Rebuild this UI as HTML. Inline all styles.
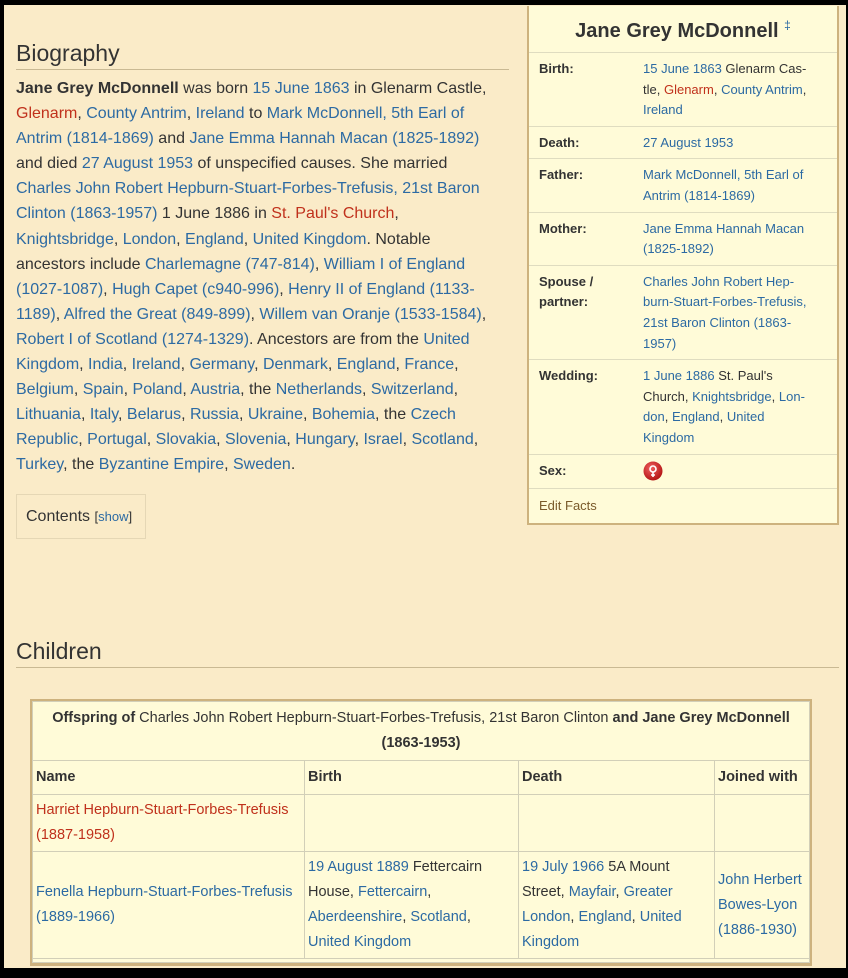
<!DOCTYPE html>
<html><head><meta charset="utf-8"><style>
*{margin:0;padding:0;box-sizing:border-box}
html,body{width:848px;height:978px;background:#000;overflow:hidden}
body{font-family:"Liberation Sans",Arial,sans-serif;color:#333}
#pg{position:absolute;left:4px;top:5px;width:842px;height:963px;background:#faebc8}
a{color:#2c6aa3;text-decoration:none}
a.r{color:#c0311c}
h2{position:absolute;font-weight:normal;font-size:23px;color:#333;border-bottom:1px solid #c9b993;padding-bottom:2px}
#bio{position:absolute;left:12px;top:71px;width:484px;font-size:16px;line-height:25.1px;color:#333}
#toc{position:absolute;left:12px;top:489px;width:130px;height:45px;border:1px solid #e5d7b5;font-size:16px;line-height:43px;padding-left:9px}
#toc span{font-size:13px}
#ib{position:absolute;left:523px;top:1px;width:312px;height:519px;background:#fffbd8;border:2px solid #cdb27e;border-top:none}
#ib .t{text-align:center;font-weight:bold;font-size:20px;padding-top:12px;height:46px;color:#333}
#ib .t sup{font-size:12px;color:#2c6aa3;font-weight:normal;vertical-align:8px}
#ib table{border-collapse:collapse;width:100%;font-size:13px;line-height:20.6px}
#ib td{border-top:1px solid #dfdcc0;vertical-align:top;padding:6px 8px 5px 10px}
#ib td.l{font-weight:bold;width:103px;color:#333}
#ib td.v{padding-left:11px;padding-right:20px}
#ct{position:absolute;left:26px;top:694px;width:782px;border:2px solid #cdb27e;border-bottom-width:3px;background:#fffbd8;font-size:14.5px;line-height:25px}
#ct table{border-collapse:collapse;width:100%}
#ct td,#ct th{border:1px solid #d2cfb8;vertical-align:middle;padding:3px 3px;text-align:left}
#ct th{font-weight:bold}
</style></head><body><div id="pg">
<h2 style="left:12px;top:35px;width:493px">Biography</h2>
<div id="bio"><b>Jane Grey McDonnell</b> was born <a>15 June 1863</a> in Glenarm Castle, <a class="r">Glenarm</a>, <a>County Antrim</a>, <a>Ireland</a> to <a>Mark McDonnell, 5th Earl of Antrim (1814-1869)</a> and <a>Jane Emma Hannah Macan (1825-1892)</a> and died <a>27 August 1953</a> of unspecified causes. She married <a>Charles John Robert Hepburn-Stuart-Forbes-Trefusis, 21st Baron Clinton (1863-1957)</a> 1 June 1886 in <a class="r">St. Paul's Church</a>, <a>Knightsbridge</a>, <a>London</a>, <a>England</a>, <a>United Kingdom</a>. Notable ancestors include <a>Charlemagne (747-814)</a>, <a>William I of England (1027-1087)</a>, <a>Hugh Capet (c940-996)</a>, <a>Henry II of England (1133-1189)</a>, <a>Alfred the Great (849-899)</a>, <a>Willem van Oranje (1533-1584)</a>, <a>Robert I of Scotland (1274-1329)</a>. Ancestors are from the <a>United Kingdom</a>, <a>India</a>, <a>Ireland</a>, <a>Germany</a>, <a>Denmark</a>, <a>England</a>, <a>France</a>, <a>Belgium</a>, <a>Spain</a>, <a>Poland</a>, <a>Austria</a>, the <a>Netherlands</a>, <a>Switzerland</a>, <a>Lithuania</a>, <a>Italy</a>, <a>Belarus</a>, <a>Russia</a>, <a>Ukraine</a>, <a>Bohemia</a>, the <a>Czech Republic</a>, <a>Portugal</a>, <a>Slovakia</a>, <a>Slovenia</a>, <a>Hungary</a>, <a>Israel</a>, <a>Scotland</a>, <a>Turkey</a>, the <a>Byzantine Empire</a>, <a>Sweden</a>.</div>
<div id="toc">Contents <span>[<a>show</a>]</span></div>
<div id="ib"><div class="t">Jane Grey McDonnell <sup>‡</sup></div>
<table>
<tr><td class="l">Birth:</td><td class="v"><a>15 June 1863</a> Glenarm Cas-tle, <a class="r">Glenarm</a>, <a>County Antrim</a>, <a>Ireland</a></td></tr>
<tr><td class="l">Death:</td><td class="v"><a>27 August 1953</a></td></tr>
<tr><td class="l">Father:</td><td class="v"><a>Mark McDonnell, 5th Earl of Antrim (1814-1869)</a></td></tr>
<tr><td class="l">Mother:</td><td class="v"><a>Jane Emma Hannah Macan (1825-1892)</a></td></tr>
<tr><td class="l">Spouse / partner:</td><td class="v"><a>Charles John Robert Hep-burn-Stuart-Forbes-Trefusis, 21st Baron Clinton (1863-1957)</a></td></tr>
<tr><td class="l">Wedding:</td><td class="v"><a>1 June 1886</a> St. Paul's Church, <a>Knightsbridge</a>, <a>Lon-don</a>, <a>England</a>, <a>United</a><br><a>Kingdom</a></td></tr>
<tr><td class="l">Sex:</td><td class="v"><svg width="20" height="20" viewBox="0 0 20 20" style="vertical-align:-4px"><defs><radialGradient id="g" cx="0.4" cy="0.35" r="0.7"><stop offset="0" stop-color="#f06060"/><stop offset="1" stop-color="#b01010"/></radialGradient></defs><circle cx="10" cy="10" r="9.5" fill="url(#g)"/><circle cx="10" cy="8" r="3" fill="none" stroke="#fff" stroke-width="1.6"/><path d="M10 11v5M8 14h4" stroke="#fff" stroke-width="1.6"/></svg></td></tr>
<tr><td colspan="2" style="color:#7a5a2a;padding-left:10px;padding-top:7px">Edit Facts</td></tr>
</table></div>
<h2 style="left:12px;top:633px;width:823px">Children</h2>
<div id="ct"><table>
<tr><td colspan="4" style="text-align:center;padding:4px 3px"><b>Offspring of</b> Charles John Robert Hepburn-Stuart-Forbes-Trefusis, 21st Baron Clinton <b>and Jane Grey McDonnell</b><br><b>(1863-1953)</b></td></tr>
<tr><th style="width:272px;height:34px">Name</th><th style="width:214px">Birth</th><th style="width:196px">Death</th><th>Joined with</th></tr>
<tr style="height:57px"><td style="vertical-align:top"><a class="r">Harriet Hepburn-Stuart-Forbes-Trefusis (1887-1958)</a></td><td></td><td></td><td></td></tr>
<tr><td><a>Fenella Hepburn-Stuart-Forbes-Trefusis (1889-1966)</a></td><td><a>19 August 1889</a> Fettercairn House, <a>Fettercairn</a>, <a>Aberdeenshire</a>, <a>Scotland</a>, <a>United Kingdom</a></td><td><a>19 July 1966</a> 5A Mount Street, <a>Mayfair</a>, <a>Greater London</a>, <a>England</a>, <a>United Kingdom</a></td><td><a>John Herbert Bowes-Lyon (1886-1930)</a></td></tr>
<tr><td colspan="4" style="height:4px;padding:0"></td></tr>
</table></div>
</div></body></html>
